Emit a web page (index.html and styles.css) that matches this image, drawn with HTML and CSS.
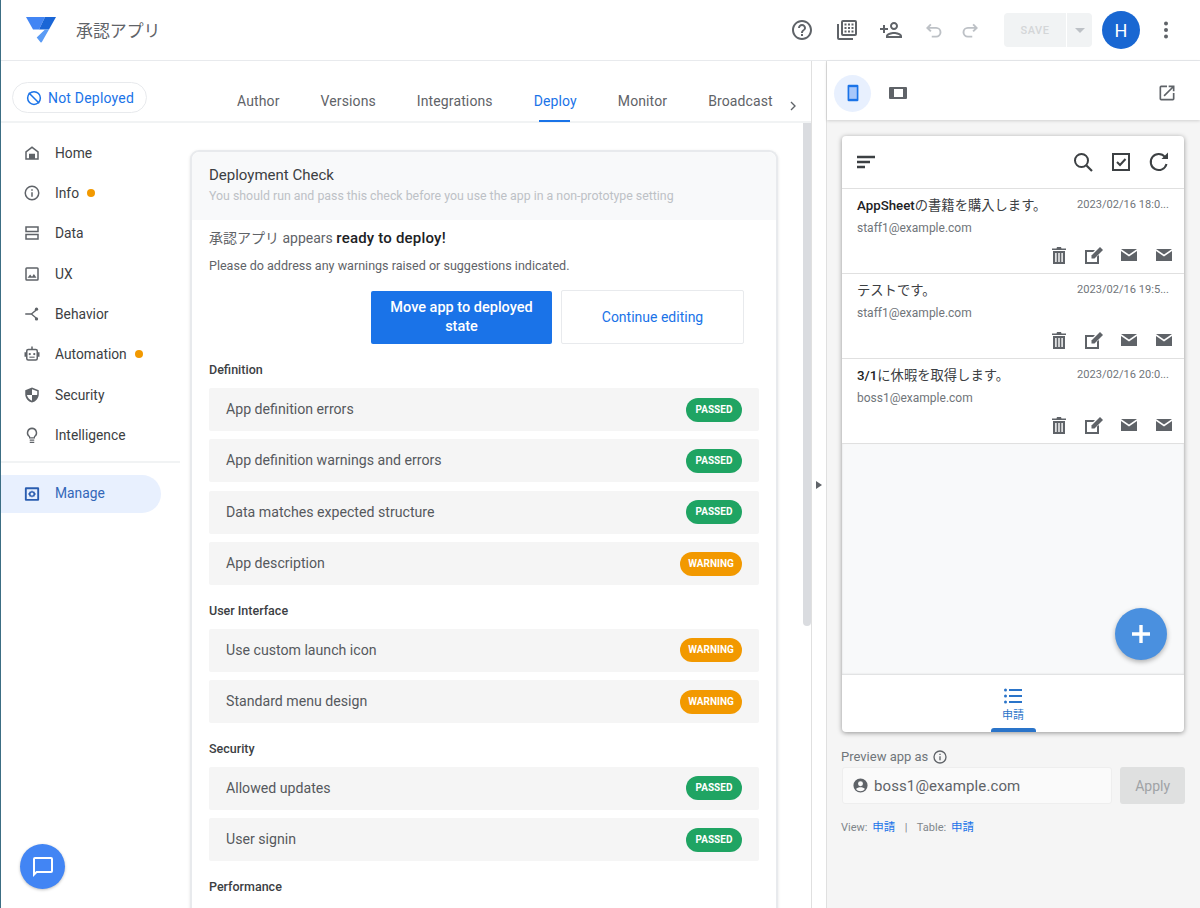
FILE: index.html
```html
<!DOCTYPE html>
<html lang="ja">
<head>
<meta charset="utf-8">
<title>承認アプリ</title>
<link rel="stylesheet" href="styles.css">
</head>
<body>
<div class="app">
  <header class="topbar">
    <svg class="logo" viewBox="0 0 30 26" width="30" height="26"><path d="M0 0h19l-6 12.500H7z" fill="#4285f4"/><path d="M19 0h11l-7 12.500H13z" fill="#1a66d6"/><path d="M13 12.500h10l-7 12.300a1 1 0 0 1-1.700.2l-3.600-4.500L19 12.500z" fill="#5a9bf5"/></svg>
    <span class="app-name">承認アプリ</span>
    <div class="top-actions">
      <svg class="ti help" viewBox="0 0 24 24"><path d="M11 18h2v-2h-2v2zm1-16C6.480 2 2 6.480 2 12s4.480 10 10 10 10-4.480 10-10S17.520 2 12 2zm0 18c-4.410 0-8-3.590-8-8s3.590-8 8-8 8 3.590 8 8-3.590 8-8 8zm0-14c-2.210 0-4 1.790-4 4h2c0-1.100.9-2 2-2s2 .9 2 2c0 2-3 1.750-3 5h2c0-2.250 3-2.500 3-5 0-2.210-1.790-4-4-4z"/></svg>
      <svg class="ti lib" viewBox="0 0 24 24"><path d="M2 6h2v14h14v2H4a2 2 0 0 1-2-2z"/><path d="M8 2h12a2 2 0 0 1 2 2v12a2 2 0 0 1-2 2H8a2 2 0 0 1-2-2V4a2 2 0 0 1 2-2zm0 2v12h12V4z" fill-rule="evenodd"/><path d="M9.500 5.500h2v2h-2zm3.500 0h2v2h-2zm3.500 0h2v2h-2zM9.500 9h2v2h-2zM13 9h2v2h-2zm3.500 0h2v2h-2zm-7 3.500h2v2h-2zm3.500 0h2v2h-2zm3.500 0h2v2h-2z"/></svg>
      <svg class="ti add" viewBox="0 0 24 24"><path d="M15 12c2.210 0 4-1.790 4-4s-1.790-4-4-4-4 1.790-4 4 1.790 4 4 4zm0-6c1.100 0 2 .9 2 2s-.9 2-2 2-2-.9-2-2 .9-2 2-2zm0 8c-2.670 0-8 1.340-8 4v2h16v-2c0-2.660-5.330-4-8-4zm-6 4c.22-.72 3.310-2 6-2 2.700 0 5.800 1.290 6 2H9zm-3-3v-3h3v-2H6V7H4v3H1v2h3v3z"/></svg>
      <svg class="ti undo" viewBox="0 0 24 24"><path d="M9 5L5 9l4 4M5 9h10a5 5 0 0 1 0 10h-5" fill="none" stroke="#bdc1c6" stroke-width="2.200"/></svg>
      <svg class="ti redo" viewBox="0 0 24 24"><path d="M15 5l4 4-4 4M19 9H9a5 5 0 0 0 0 10h5" fill="none" stroke="#bdc1c6" stroke-width="2.200"/></svg>
      <div class="save"><span class="save-main">SAVE</span><span class="save-drop"><i class="caret"></i></span></div>
      <div class="avatar">H</div>
      <svg class="ti more" viewBox="0 0 24 24"><circle cx="12" cy="5.500" r="2"/><circle cx="12" cy="12" r="2"/><circle cx="12" cy="18.500" r="2"/></svg>
    </div>
  </header>

  <div class="workspace">
    <section class="editor">
      <div class="tabrow">
        <div class="status-pill">
          <svg class="pill-icon" viewBox="0 0 24 24"><circle cx="12" cy="12" r="8.500" fill="none" stroke="#1a73e8" stroke-width="2"/><path d="M5 5l14 14" stroke="#1a73e8" stroke-width="2"/></svg>
          Not Deployed
        </div>
        <nav class="tabs">
          <span class="tab">Author</span>
          <span class="tab">Versions</span>
          <span class="tab">Integrations</span>
          <span class="tab active">Deploy</span>
          <span class="tab">Monitor</span>
          <span class="tab">Broadcast</span>
        </nav>
        <svg class="tab-next" viewBox="0 0 24 24"><path d="M9 6l6 6-6 6" fill="none" stroke="#5f6368" stroke-width="2"/></svg>
      </div>
      <div class="editor-body">
        <aside class="sidebar">
          <a class="nav-item"><svg class="ni" viewBox="0 0 24 24"><path d="M12 3l9 7v11H3V10zm0 2.600L5 11v8h3v-6h8v6h3v-8z" fill-rule="evenodd"/></svg>Home</a>
          <a class="nav-item"><svg class="ni" viewBox="0 0 24 24"><path d="M11 7h2v2h-2zm0 4h2v6h-2zm1-9a10 10 0 1 0 0 20 10 10 0 0 0 0-20zm0 18a8 8 0 1 1 0-16 8 8 0 0 1 0 16z"/></svg>Info<i class="dot"></i></a>
          <a class="nav-item"><svg class="ni" viewBox="0 0 24 24"><path d="M3 3h18v8H3zm2 2v4h14V5zM3 13h18v8H3zm2 2v4h14v-4z" fill-rule="evenodd"/></svg>Data</a>
          <a class="nav-item"><svg class="ni" viewBox="0 0 24 24"><path d="M5 3h14a2 2 0 0 1 2 2v14a2 2 0 0 1-2 2H5a2 2 0 0 1-2-2V5a2 2 0 0 1 2-2zm0 2v14h14V5z" fill-rule="evenodd"/><path d="M6 17l3.500-4.500 2.500 3 2.500-3.500L18 17z"/></svg>UX</a>
          <a class="nav-item"><svg class="ni" viewBox="0 0 24 24"><circle cx="18" cy="5.500" r="2.200"/><circle cx="18" cy="18.500" r="2.200"/><path d="M3 11h8l6-5 1 1.500-5.500 4.500 5.500 4.500-1 1.500-6-5H3z"/></svg>Behavior</a>
          <a class="nav-item"><svg class="ni" viewBox="0 0 24 24"><path d="M11 2h2v3h4a3 3 0 0 1 3 3v1.500h2v6h-2V18a3 3 0 0 1-3 3H7a3 3 0 0 1-3-3v-2.500H2v-6h2V8a3 3 0 0 1 3-3h4zM7 7a1 1 0 0 0-1 1v10a1 1 0 0 0 1 1h10a1 1 0 0 0 1-1V8a1 1 0 0 0-1-1z" fill-rule="evenodd"/><circle cx="9" cy="12" r="1.500"/><circle cx="15" cy="12" r="1.500"/><path d="M8.500 15.500h7v1.500h-7z"/></svg>Automation<i class="dot"></i></a>
          <a class="nav-item"><svg class="ni" viewBox="0 0 24 24"><path d="M12 2l9 3.500V11c0 5.300-3.800 9.800-9 11-5.200-1.200-9-5.700-9-11V5.500zm0 2.200v7.800h6.800c.1-.3.200-.7.200-1V7zM12 12H5.200c.8 3.500 3.400 6.300 6.800 7.500z" fill-rule="evenodd"/></svg>Security</a>
          <a class="nav-item"><svg class="ni" viewBox="0 0 24 24"><path d="M9 21h6v1.500H9zm0-3h6v1.500H9zm3-16a7 7 0 0 0-4 12.700V16.500h8v-1.800A7 7 0 0 0 12 2zm2.500 11.500V15h-5v-1.500a5 5 0 1 1 5 0z" fill-rule="evenodd"/></svg>Intelligence</a>
          <hr class="nav-sep">
          <a class="nav-item selected"><svg class="ni" viewBox="0 0 24 24"><path fill-rule="evenodd" d="M4 3h16a1.500 1.500 0 0 1 1.500 1.500v15A1.500 1.500 0 0 1 20 21H4a1.500 1.500 0 0 1-1.500-1.500v-15A1.500 1.500 0 0 1 4 3zm1 2.500v13h14v-13zM12 7l1 1.700 2-.2.800 1.800 1.400 1.700-1.400 1.700-.8 1.800-2-.2L12 17l-1-1.700-2 .2-.8-1.800L6.800 12l1.400-1.700.8-1.800 2 .2zm0 3a2 2 0 1 0 0 4 2 2 0 0 0 0-4z"/></svg>Manage</a>
        </aside>
        <main class="main">
          <article class="card">
            <div class="card-head">
              <h1 class="card-title">Deployment Check</h1>
              <p class="card-sub">You should run and pass this check before you use the app in a non-prototype setting</p>
            </div>
            <div class="card-body">
              <p class="ready">承認アプリ appears <b>ready to deploy!</b></p>
              <p class="hint">Please do address any warnings raised or suggestions indicated.</p>
              <div class="buttons">
                <button class="btn primary">Move app to deployed state</button>
                <button class="btn secondary">Continue editing</button>
              </div>
              <h2 class="sec first">Definition</h2>
              <div class="row"><span>App definition errors</span><b class="badge pass">PASSED</b></div>
              <div class="row"><span>App definition warnings and errors</span><b class="badge pass">PASSED</b></div>
              <div class="row"><span>Data matches expected structure</span><b class="badge pass">PASSED</b></div>
              <div class="row"><span>App description</span><b class="badge warn">WARNING</b></div>
              <h2 class="sec">User Interface</h2>
              <div class="row"><span>Use custom launch icon</span><b class="badge warn">WARNING</b></div>
              <div class="row"><span>Standard menu design</span><b class="badge warn">WARNING</b></div>
              <h2 class="sec">Security</h2>
              <div class="row"><span>Allowed updates</span><b class="badge pass">PASSED</b></div>
              <div class="row"><span>User signin</span><b class="badge pass">PASSED</b></div>
              <h2 class="sec">Performance</h2>
            </div>
          </article>
        </main>
        <div class="scrollbar"><div class="thumb"></div></div>
      </div>
      <button class="chat"><svg viewBox="0 0 24 24" width="24" height="24"><path d="M20 2H4a2 2 0 0 0-2 2v18l4-4h14a2 2 0 0 0 2-2V4a2 2 0 0 0-2-2zm0 14H5.200L4 17.200V4h16z" fill="#fff"/></svg></button>
    </section>

    <div class="divider"><i class="divider-arrow"></i></div>

    <section class="preview">
      <div class="preview-bar">
        <span class="device on"><svg viewBox="0 0 24 24" width="20" height="20"><path d="M7 2h10a1.500 1.500 0 0 1 1.500 1.500v17A1.500 1.500 0 0 1 17 22H7a1.500 1.500 0 0 1-1.500-1.500v-17A1.500 1.500 0 0 1 7 2z" fill="#1a73e8"/><path d="M7.500 5h9v14h-9z" fill="#a8c7fa"/></svg></span>
        <span class="device"><svg viewBox="0 0 18 12" width="18" height="12"><path d="M1 0h16a1 1 0 0 1 1 1v10a1 1 0 0 1-1 1H1a1 1 0 0 1-1-1V1a1 1 0 0 1 1-1zm4 2v8h9V2z" fill="#5f6368" fill-rule="evenodd"/></svg></span>
        <svg class="open" viewBox="0 0 24 24" width="20" height="20"><path d="M19 19H5V5h7V3H5a2 2 0 0 0-2 2v14a2 2 0 0 0 2 2h14a2 2 0 0 0 2-2v-7h-2zM14 3v2h3.600l-9.800 9.800 1.400 1.400L19 6.400V10h2V3z" fill="#5f6368"/></svg>
      </div>
      <div class="preview-body">
        <div class="phone">
          <div class="phone-head">
            <svg class="ph-menu" viewBox="0 0 18 14" width="18" height="14"><path d="M0 .8h18v2.400H0zM0 5.800h13v2.400H0zM0 10.800h8v2.400H0z" fill="#3c4043"/></svg>
            <div class="ph-actions">
              <svg viewBox="0 0 24 24" width="24" height="24"><circle cx="10.500" cy="10.500" r="6.500" fill="none" stroke="#3c4043" stroke-width="2"/><path d="M15.500 15.500L21 21" stroke="#3c4043" stroke-width="2.200"/></svg>
              <svg viewBox="0 0 24 24" width="24" height="24"><path d="M4 4h16v16H4z" fill="none" stroke="#3c4043" stroke-width="2"/><path d="M8 12l3 3 5.500-6" fill="none" stroke="#3c4043" stroke-width="2"/></svg>
              <svg viewBox="0 0 24 24" width="24" height="24"><path d="M19.500 14a8 8 0 1 1-1.500-7" fill="none" stroke="#3c4043" stroke-width="2"/><path d="M21 2.500V9h-6.500z" fill="#3c4043"/></svg>
            </div>
          </div>
          <div class="ph-row">
            <div class="ph-line"><span class="ph-title"><b>AppSheet</b>の書籍を購入します。</span><span class="ph-date">2023/02/16 18:0...</span></div>
            <div class="ph-mail">staff1@example.com</div>
            <div class="ph-icons">
              <span class="ic"><svg viewBox="0 0 14 17" width="14" height="17"><path class="fg" fill-rule="evenodd" d="M5 0h4l.5 1.500H14V3H0V1.500h4.500zM1 4h12v13H1zm2.200 2v9h1.400V6zm3.100 0v9h1.400V6zm3.100 0v9h1.400V6z"/></svg></span>
              <span class="ic"><svg viewBox="0 0 18 17" width="18" height="17"><path class="fg" fill-rule="evenodd" d="M0 3h10L8.200 5H2v10h10V9.500L14 8v9H0z"/><path class="fg" d="M15 0l3 3-8.500 8.500H6.500v-3z"/></svg></span>
              <span class="ic"><svg viewBox="0 0 16 12" width="16" height="12"><path class="fg" d="M0 0h16L8 5.500zM0 2l8 5.500L16 2v10H0z"/></svg></span>
              <span class="ic"><svg viewBox="0 0 16 12" width="16" height="12"><path class="fg" d="M0 0h16L8 5.500zM0 2l8 5.500L16 2v10H0z"/></svg></span>
            </div>
          </div>
          <div class="ph-row">
            <div class="ph-line"><span class="ph-title">テストです。</span><span class="ph-date">2023/02/16 19:5...</span></div>
            <div class="ph-mail">staff1@example.com</div>
            <div class="ph-icons">
              <span class="ic"><svg viewBox="0 0 14 17" width="14" height="17"><path class="fg" fill-rule="evenodd" d="M5 0h4l.5 1.500H14V3H0V1.500h4.500zM1 4h12v13H1zm2.200 2v9h1.400V6zm3.100 0v9h1.400V6zm3.100 0v9h1.400V6z"/></svg></span>
              <span class="ic"><svg viewBox="0 0 18 17" width="18" height="17"><path class="fg" fill-rule="evenodd" d="M0 3h10L8.200 5H2v10h10V9.500L14 8v9H0z"/><path class="fg" d="M15 0l3 3-8.500 8.500H6.500v-3z"/></svg></span>
              <span class="ic"><svg viewBox="0 0 16 12" width="16" height="12"><path class="fg" d="M0 0h16L8 5.500zM0 2l8 5.500L16 2v10H0z"/></svg></span>
              <span class="ic"><svg viewBox="0 0 16 12" width="16" height="12"><path class="fg" d="M0 0h16L8 5.500zM0 2l8 5.500L16 2v10H0z"/></svg></span>
            </div>
          </div>
          <div class="ph-row">
            <div class="ph-line"><span class="ph-title"><b>3/1</b>に休暇を取得します。</span><span class="ph-date">2023/02/16 20:0...</span></div>
            <div class="ph-mail">boss1@example.com</div>
            <div class="ph-icons">
              <span class="ic"><svg viewBox="0 0 14 17" width="14" height="17"><path class="fg" fill-rule="evenodd" d="M5 0h4l.5 1.500H14V3H0V1.500h4.500zM1 4h12v13H1zm2.200 2v9h1.400V6zm3.100 0v9h1.400V6zm3.100 0v9h1.400V6z"/></svg></span>
              <span class="ic"><svg viewBox="0 0 18 17" width="18" height="17"><path class="fg" fill-rule="evenodd" d="M0 3h10L8.200 5H2v10h10V9.500L14 8v9H0z"/><path class="fg" d="M15 0l3 3-8.500 8.500H6.500v-3z"/></svg></span>
              <span class="ic"><svg viewBox="0 0 16 12" width="16" height="12"><path class="fg" d="M0 0h16L8 5.500zM0 2l8 5.500L16 2v10H0z"/></svg></span>
              <span class="ic"><svg viewBox="0 0 16 12" width="16" height="12"><path class="fg" d="M0 0h16L8 5.500zM0 2l8 5.500L16 2v10H0z"/></svg></span>
            </div>
          </div>
          <div class="ph-empty">
            <button class="fab"><svg viewBox="0 0 24 24" width="24" height="24"><path d="M10.300 3h3.400v7.300H21v3.400h-7.300V21h-3.400v-7.300H3v-3.400h7.300z" fill="#fff"/></svg></button>
          </div>
          <div class="ph-tabs">
            <svg viewBox="0 0 18 16" width="18" height="16"><path d="M5 1h13v2H5zM5 7h13v2H5zM5 13h13v2H5z" fill="#2a74c9"/><circle cx="1.500" cy="2" r="1.500" fill="#2a74c9"/><circle cx="1.500" cy="8" r="1.500" fill="#2a74c9"/><circle cx="1.500" cy="14" r="1.500" fill="#2a74c9"/></svg>
            <span class="ph-tab-label">申請</span>
            <i class="ph-tab-mark"></i>
          </div>
        </div>
        <div class="as-label">Preview app as <svg viewBox="0 0 24 24" width="16" height="16"><path fill="#5f6368" d="M11 7h2v2h-2zm0 4h2v6h-2zm1-9a10 10 0 1 0 0 20 10 10 0 0 0 0-20zm0 18a8 8 0 1 1 0-16 8 8 0 0 1 0 16z"/></svg></div>
        <div class="as-row">
          <div class="as-input">
            <svg viewBox="0 0 24 24" width="17" height="17"><path fill="#5f6368" fill-rule="evenodd" d="M12 2a10 10 0 1 0 0 20 10 10 0 0 0 0-20zm0 4a3.500 3.500 0 1 1 0 7 3.500 3.500 0 0 1 0-7zm0 14c-2.600 0-4.900-1.300-6.300-3.200C7 15.300 9.500 14.500 12 14.500s5 .8 6.300 2.300A7.900 7.900 0 0 1 12 20z"/></svg>
            boss1@example.com
          </div>
          <button class="apply">Apply</button>
        </div>
        <div class="meta">View: <a>申請</a><span class="meta-sep">|</span>Table: <a>申請</a></div>
      </div>
    </section>
  </div>
</div>
</body>
</html>
```

FILE: styles.css
```css
* { box-sizing: border-box; }
html, body { margin: 0; height: 100%; overflow: hidden; }
body {
  font-family: Roboto, "Noto Sans CJK JP", sans-serif;
  color: #3c4043;
  background: #fff;
}
.app {
  width: 1200px;
  height: 908px;
  display: flex;
  flex-direction: column;
  border-left: 1px solid #3c6e84;
  overflow: hidden;
}

/* top bar */
.topbar {
  height: 61px;
  flex: none;
  display: flex;
  align-items: center;
  border-bottom: 1px solid #e8eaed;
  padding-left: 25px;
}
.logo { margin-top: -1px; }
.app-name { margin-left: 20px; font-size: 16.900px; color: #5f6368; margin-top: -2px; }
.top-actions { margin-left: auto; display: flex; align-items: center; }
.ti { width: 24px; height: 24px; fill: #5f6368; flex: none; }
.help { margin-right: 21px; }
.lib { margin-right: 20px; }
.add { margin-right: 18px; }
.undo { width: 21px; height: 21px; margin: 0 14.500px 0 1.500px; }
.redo { width: 21px; height: 21px; margin: 0 23.500px 0 1.500px; }
.save {
  width: 88px;
  height: 34px;
  display: flex;
  border-radius: 4px;
  overflow: hidden;
  background: #f1f3f4;
  margin-right: 10px;
}
.save-main {
  flex: 1;
  display: flex;
  align-items: center;
  justify-content: center;
  font-size: 11px;
  font-weight: 500;
  letter-spacing: .6px;
  color: #d4d6d8;
  border-right: 1px solid #fff;
}
.save-drop { width: 25px; display: flex; align-items: center; justify-content: center; }
.caret { border: 5px solid transparent; border-top: 5px solid #bdc1c6; border-bottom: 0; }
.avatar {
  width: 38px;
  height: 38px;
  border-radius: 50%;
  background: #1967d2;
  color: #fff;
  font-size: 18px;
  display: flex;
  align-items: center;
  justify-content: center;
  margin-right: 14px;
}
.more { margin-right: 22px; }

/* workspace */
.workspace { flex: 1; display: flex; min-height: 0; }
.editor {
  position: relative;
  width: 811px;
  flex: none;
  display: flex;
  flex-direction: column;
  border-right: 1px solid #e0e0e0;
}
.tabrow {
  height: 62px;
  flex: none;
  display: flex;
  border-bottom: 2px solid #f1f3f4;
  padding-left: 11px;
}
.status-pill {
  margin-top: 21px;
  height: 31px;
  width: 135px;
  border: 1px solid #e8eaed;
  border-radius: 16px;
  display: flex;
  align-items: center;
  gap: 5px;
  padding-left: 12px;
  font-size: 14px;
  color: #1a73e8;
  letter-spacing: .2px;
}
.pill-icon { width: 18px; height: 18px; }
.tabs {
  margin-left: 90px;
  display: flex;
  gap: 41px;
  align-items: flex-start;
}
.tab {
  position: relative;
  margin-top: 32px;
  height: 29px;
  font-size: 14px;
  color: #5f6368;
  font-weight: 400;
  letter-spacing: .12px;
  line-height: 16px;
}
.tab.active { color: #1a73e8; }
.tab.active::after {
  content: "";
  position: absolute;
  left: 5px;
  right: 7px;
  bottom: 0;
  height: 2px;
  background: #1a73e8;
}
.tab-next { width: 16px; height: 16px; margin: 37px 0 0 12px; }
.editor-body { flex: 1; display: flex; min-height: 0; }

/* sidebar */
.sidebar { width: 179px; flex: none; padding-top: 9.700px; }
.nav-item {
  height: 40.300px;
  display: flex;
  align-items: center;
  padding-left: 22px;
  font-size: 13.800px;
  color: #3c4043;
}
.ni { width: 18px; height: 18px; fill: #5f6368; margin-right: 14px; flex: none; }
.dot { width: 8px; height: 8px; border-radius: 50%; background: #f29900; margin-left: 8px; }
.nav-sep { border: 0; border-top: 2px solid #f1f3f4; margin: 6.300px 0 12px -1px; }
.nav-item.selected {
  height: 38px;
  width: 160px;
  background: #e8f0fe;
  border-radius: 0 19px 19px 0;
  color: #3367b8;
  padding-bottom: 3px;
}
.selected .ni { fill: #2a5db0; margin-top: 3px; }

/* main */
.main { width: 623px; flex: none; overflow: hidden; padding: 27px 0 0 10px; }
.card {
  width: 588px;
  background: #fff;
  border: 2px solid #e8eaed;
  border-bottom: 0;
  border-radius: 9px 9px 0 0;
  box-shadow: 0 1px 3px rgba(60, 64, 67, .15);
}
.card-head {
  height: 68px;
  background: #f8f9fa;
  padding: 14px 17px 0;
  border-radius: 8px 8px 0 0;
}
.card-title { margin: 0; font-size: 15px; font-weight: 400; line-height: 19px; color: #3c4043; }
.card-sub { margin: 3px 0 0; font-size: 12.350px; line-height: 16px; color: #bdc1c6; }
.card-body { padding: 8px 17px 60px; }
.ready { margin: 0; font-size: 14px; line-height: 20px; color: #5f6368; }
.ready b { font-size: 15px; letter-spacing: .2px; font-weight: 500; color: #202124; }
.hint { margin: 9px 0 0; font-size: 12.550px; line-height: 18px; color: #5f6368; }
.buttons { display: flex; justify-content: flex-end; gap: 9px; margin: 15px 15px 0 0; height: 54px; }
.btn { font-family: inherit; line-height: 19px; border-radius: 2px; }
.primary {
  width: 181px;
  height: 53px;
  margin-top: 1px;
  background: #1a73e8;
  color: #fff;
  border: 0;
  padding: 0 14px 1px;
  font-size: 14.500px;
  font-weight: 500;
}
.secondary {
  width: 183px;
  height: 54px;
  background: #fff;
  color: #1a73e8;
  border: 1px solid #e8eaed;
  font-size: 14px;
  font-weight: 400;
}
.sec { margin: 0 0 10px; font-size: 12.500px; font-weight: 500; line-height: 16px; color: #3c4043; }
.sec.first { margin-top: 18px; }
.row + .sec { margin-top: 17.600px; }
.row {
  height: 43px;
  width: 550px;
  margin-bottom: 8.400px;
  background: #f5f5f5;
  border-radius: 2px;
  display: flex;
  align-items: center;
  justify-content: space-between;
  padding: 0 17px 1px;
  font-size: 14.150px;
  color: #55595d;
}
.badge {
  height: 24px;
  border-radius: 12px;
  color: #fff;
  font-size: 10px;
  font-weight: 700;
  display: flex;
  align-items: center;
  justify-content: center;
  margin-top: 1px;
  padding-bottom: 1px;
}
.pass { width: 56px; background: #1fa463; }
.warn { width: 62px; background: #f29900; }
.scrollbar { flex: 1; }
.thumb { width: 8px; height: 503px; margin-left: 0; background: #dadce0; border-radius: 0 0 4px 4px; }
.chat {
  position: absolute;
  left: 19px;
  bottom: 19px;
  width: 45px;
  height: 45px;
  border: 0;
  border-radius: 50%;
  background: #4285f4;
  box-shadow: 0 1px 3px rgba(0, 0, 0, .25);
  display: flex;
  align-items: center;
  justify-content: center;
  padding: 0;
}

/* divider */
.divider {
  width: 14px;
  flex: none;
  display: flex;
  align-items: center;
  justify-content: center;
  padding-right: 1px;
}
.divider-arrow { border: 4px solid transparent; border-left: 6px solid #5f6368; border-right: 0; }

/* preview */
.preview {
  flex: 1;
  display: flex;
  flex-direction: column;
  background: #f5f5f5;
  border-left: 1px solid #e0e0e0;
  min-width: 0;
}
.preview-bar {
  height: 59px;
  flex: none;
  background: #fff;
  display: flex;
  align-items: center;
  padding: 5px 23px 0 7px;
  gap: 8px;
  box-shadow: 0 1px 3px rgba(0, 0, 0, .15);
  position: relative;
}
.device {
  width: 37px;
  height: 37px;
  border-radius: 50%;
  display: flex;
  align-items: center;
  justify-content: center;
}
.device.on { background: #e8f0fe; }
.open { margin-left: auto; }
.preview-body { flex: 1; padding: 16px 15px 0 15px; }
.phone {
  width: 342px;
  height: 596px;
  background: #fff;
  border-radius: 4px;
  box-shadow: 0 1px 5px rgba(0, 0, 0, .4);
  display: flex;
  flex-direction: column;
  overflow: hidden;
}
.phone-head {
  height: 53px;
  flex: none;
  display: flex;
  align-items: center;
  justify-content: space-between;
  padding: 0 13px 0 15px;
  border-bottom: 1px solid #e0e0e0;
}
.ph-actions { display: flex; gap: 14px; }
.ph-row { height: 85px; flex: none; border-bottom: 1px solid #e0e0e0; padding: 6px 13px 0 15px; }
.ph-line { display: flex; justify-content: space-between; align-items: center; height: 19px; }
.ph-title { font-size: 13.300px; color: #3c4043; }
.ph-title b { font-weight: 500; color: #202124; }
.ph-date { font-size: 11.100px; color: #70757a; width: 94px; white-space: nowrap; }
.ph-mail { margin-top: 5px; font-size: 12px; line-height: 18px; color: #70757a; }
.ph-icons { display: flex; justify-content: flex-end; align-items: center; margin: 9px -10.500px 0 0; height: 18px; }
.ic { width: 35px; display: flex; justify-content: center; align-items: center; }
.fg { fill: #5f6368; }
.ph-empty { flex: 1; background: #f8f9fa; position: relative; box-shadow: inset 0 -1px 2px rgba(0, 0, 0, .12); }
.fab {
  position: absolute;
  right: 17px;
  bottom: 15px;
  width: 52px;
  height: 52px;
  border: 0;
  border-radius: 50%;
  background: #4a90df;
  box-shadow: 0 2px 5px rgba(0, 0, 0, .3);
  display: flex;
  align-items: center;
  justify-content: center;
  padding: 0;
}
.ph-tabs {
  height: 57px;
  flex: none;
  position: relative;
  display: flex;
  flex-direction: column;
  align-items: center;
  padding-top: 13px;
}
.ph-tab-label { font-size: 11px; line-height: 16px; color: #2a74c9; margin-top: 4px; }
.ph-tab-mark {
  position: absolute;
  left: 149px;
  bottom: 0;
  width: 45px;
  height: 4px;
  background: #2a74c9;
  border-radius: 3px 3px 0 0;
}
.as-label {
  margin: 16px 0 0 -1px;
  display: flex;
  align-items: center;
  gap: 4px;
  font-size: 13px;
  line-height: 18px;
  color: #70757a;
}
.as-row { display: flex; gap: 8px; margin-top: 1px; }
.as-input {
  width: 271px;
  height: 37px;
  background: #fafafa;
  border: 1px solid #eeeeee;
  border-radius: 3px;
  display: flex;
  align-items: center;
  gap: 5px;
  padding-left: 9px;
  font-size: 15px;
  color: #5f6368;
  letter-spacing: .1px;
}
.apply {
  width: 65px;
  height: 37px;
  border: 0;
  border-radius: 3px;
  background: #dfe0e0;
  color: #a0a3a6;
  font-family: inherit;
  font-size: 14px;
}
.meta { margin: 14px 0 0 -1px; font-size: 11px; line-height: 18px; color: #80868b; }
.meta a { color: #1a73e8; font-size: 11.500px; margin-left: 2px; }
.meta-sep { margin: 0 9.500px; }
```
